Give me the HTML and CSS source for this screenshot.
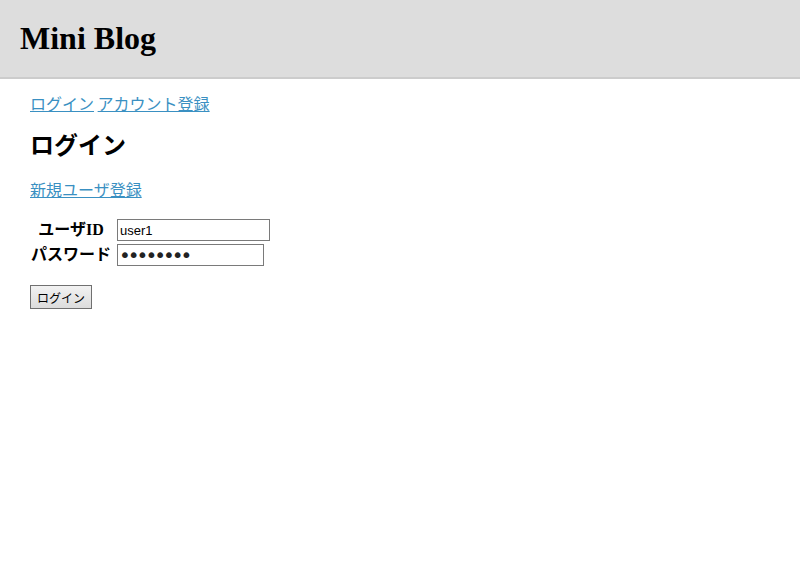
FILE: index.html
```html
<!DOCTYPE html>
<html lang="ja">
<head>
<meta charset="utf-8">
<title>Mini Blog</title>
<link rel="stylesheet" href="styles.css">
</head>
<body>
<header class="site-header">
  <h1 class="site-title">Mini Blog</h1>
</header>
<main class="content">
  <nav class="nav"><a href="#">ログイン</a> <a href="#">アカウント登録</a></nav>
  <h2 class="page-title">ログイン</h2>
  <p class="signup"><a href="#">新規ユーザ登録</a></p>
  <form class="login-form">
    <table class="form-table">
      <tr>
        <th>ユーザID</th>
        <td><input class="text-input user" type="text" value="user1"></td>
      </tr>
      <tr>
        <th>パスワード</th>
        <td><input class="text-input pass" type="password" value="password"></td>
      </tr>
    </table>
    <button class="submit" type="button">ログイン</button>
  </form>
</main>
</body>
</html>
```
FILE: styles.css
```css
html, body {
  margin: 0;
  padding: 0;
  background: #fff;
}
body {
  font-family: "Noto Sans CJK JP", sans-serif;
  color: #000;
}
.site-header {
  background: #dddddd;
  border-bottom: 2px solid #cccccc;
  height: 77px;
  padding: 0 20px;
  display: flex;
  align-items: center;
}
.site-title {
  margin: 0;
  font-family: "Liberation Serif", serif;
  font-size: 32px;
  font-weight: bold;
  line-height: 1;
  padding-bottom: 2px;
}
.content {
  padding: 0 30px;
}
.nav {
  margin-top: 12px;
  font-size: 16px;
  line-height: 24px;
}
a {
  color: #3a90c2;
  text-decoration: underline;
}
.page-title {
  margin: 14px 0 0;
  font-size: 24px;
  line-height: 30px;
  font-weight: bold;
}
.signup {
  margin: 18px 0 0;
  font-size: 16px;
  line-height: 24px;
}
.form-table {
  margin-top: 15px;
  border-collapse: separate;
  border-spacing: 2px 3px;
  margin-left: -2px;
}
.form-table th {
  font-family: "Liberation Serif", "Noto Sans CJK JP", serif;
  font-size: 16px;
  font-weight: bold;
  text-align: center;
  padding: 0 4px 0 1px;
  line-height: 22px;
}
.form-table td {
  padding: 0;
}
.text-input {
  display: block;
  box-sizing: border-box;
  height: 22px;
  border: 1px solid #7a7a7a;
  font-family: "Liberation Sans", Arial, sans-serif;
  font-size: 13px;
  padding: 0 2px;
  margin: 0;
  color: #000;
}
.user { width: 153px; }
.pass {
  width: 147px;
  font-family: "DejaVu Sans", sans-serif;
  font-size: 20px;
  letter-spacing: -3px;
  padding: 0 1px;
  color: #222;
}
.submit {
  margin-top: 16px;
  width: 62px;
  height: 24px;
  border: 1px solid #707070;
  background: linear-gradient(#f2f2f2, #dcdcdc);
  font-family: "Noto Sans CJK JP", sans-serif;
  font-size: 12px;
  color: #000;
  padding: 0;
  border-radius: 0;
}
```
